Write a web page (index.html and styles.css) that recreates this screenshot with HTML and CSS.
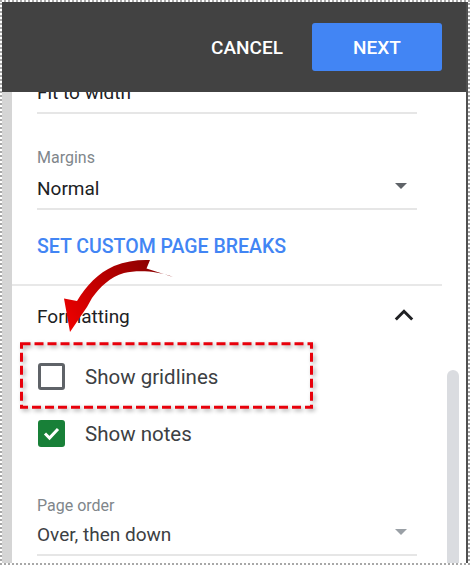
FILE: index.html
```html
<!DOCTYPE html>
<html lang="en">
<head>
    <meta charset="UTF-8">
    <title>Print settings</title>
    <link rel="stylesheet" href="styles.css">
</head>
<body>
<div class="frame">
    <div class="window">
        <header class="toolbar">
            <span class="toolbar__cancel">CANCEL</span>
            <span class="toolbar__next">NEXT</span>
        </header>
        <div class="main">
            <div class="gutter"></div>
            <div class="panel">
                <div class="field field--cut">
                    <div class="field__label">Scale</div>
                    <div class="field__value">Fit to width</div>
                </div>
                <div class="field">
                    <div class="field__label">Margins</div>
                    <div class="field__value">Normal <span class="caret"></span></div>
                </div>
                <div class="link">SET CUSTOM PAGE BREAKS</div>
                <div class="divider"></div>
                <div class="section">
                    <span>Formatting</span>
                    <svg class="section__chevron" width="20" height="12" viewBox="0 0 20 12">
                        <polyline points="1.8,10.5 10,2.3 18.2,10.5" fill="none" stroke="#202124" stroke-width="3"/>
                    </svg>
                </div>
                <div class="checks">
                    <div class="check">
                        <span class="check__box"></span>
                        <span class="check__label">Show gridlines</span>
                    </div>
                    <div class="check">
                        <span class="check__box check__box--on">
                            <svg width="21" height="21" viewBox="0 0 21 21">
                                <polyline points="4,10.5 8.5,15 17,6" fill="none" stroke="#fff" stroke-width="3"/>
                            </svg>
                        </span>
                        <span class="check__label">Show notes</span>
                    </div>
                </div>
                <div class="field field--muted">
                    <div class="field__label">Page order</div>
                    <div class="field__value">Over, then down <span class="caret"></span></div>
                </div>
            </div>
            <div class="scroll">
                <div class="scroll__thumb"></div>
            </div>
        </div>
    </div>
</div>
<svg class="annotation" width="470" height="565" viewBox="0 0 470 565">
    <defs>
        <linearGradient id="arrowFill" x1="170" y1="262" x2="70" y2="330" gradientUnits="userSpaceOnUse">
            <stop offset="0" stop-color="#7d0000"/>
            <stop offset="1" stop-color="#ee0000"/>
        </linearGradient>
    </defs>
    <rect class="annotation__box" x="21.5" y="343.8" width="290" height="63.5"/>
    <path d="M150,260 L146.5,268.5 L173,277 C158,271 138,270 124,273 C110,277 100,287 92,298 L87,307 L70,332 L64,298.5 L77,301 C86,286 98,273 114,266 C126,261 138,259.5 150,260 Z" fill="url(#arrowFill)"/>
</svg>
</body>
</html>
```

FILE: styles.css
```css
html,
body {
    margin: 0;
    padding: 0;
    background: #fff;
}

body {
    position: relative;
    width: 470px;
    height: 565px;
    font-family: Roboto, "Noto Sans", sans-serif;
}

.frame {
    box-sizing: border-box;
    width: 470px;
    height: 565px;
    border: 2px dotted #a8a8a8;
}

.window {
    display: flex;
    flex-direction: column;
    height: 100%;
    border-right: 2px solid #505050;
}

.toolbar {
    flex: none;
    display: flex;
    align-items: center;
    justify-content: flex-end;
    height: 90px;
    padding-right: 24px;
    background: #424242;
}

.toolbar__cancel {
    margin-right: 29px;
    color: #fff;
    font-size: 19px;
    font-weight: 500;
}

.toolbar__next {
    display: flex;
    align-items: center;
    justify-content: center;
    width: 130px;
    height: 48px;
    border-radius: 3px;
    background: #4285f4;
    color: #fff;
    font-size: 19px;
    font-weight: 500;
}

.main {
    flex: 1;
    display: flex;
    min-height: 0;
}

.gutter {
    width: 10px;
    background: #d5d5d5;
}

.panel {
    width: 430px;
    overflow: hidden;
}

.scroll {
    flex: 1;
    overflow: hidden;
}

.scroll__thumb {
    width: 12px;
    height: 300px;
    margin: 278px 0 0 5px;
    border-radius: 6px 6px 0 0;
    background: #dadce0;
}

.field {
    margin: 0 25px;
    padding-top: 34px;
    border-bottom: 2px solid #e6e6e6;
}

.field--cut {
    margin-top: -74px;
}

.field__label {
    color: #80868b;
    font-size: 16px;
    line-height: 20px;
}

.field__value {
    display: flex;
    align-items: center;
    justify-content: space-between;
    margin-top: 7px;
    padding-bottom: 5px;
    color: #202124;
    font-size: 19px;
    line-height: 28px;
}

.field--muted .field__value {
    margin-top: 5px;
    color: #3c4043;
}

.caret {
    width: 0;
    height: 0;
    margin: 0 10px 6px 0;
    border-left: 6px solid transparent;
    border-right: 6px solid transparent;
    border-top: 6px solid #5f6368;
}

.field--muted .caret {
    border-top-color: #9aa0a6;
}

.link {
    margin: 25px 25px 0;
    color: #4285f4;
    font-size: 19.5px;
    font-weight: 500;
    line-height: 24px;
}

.divider {
    height: 2px;
    margin-top: 24.5px;
    background: #e8e8e8;
}

.section {
    display: flex;
    align-items: center;
    justify-content: space-between;
    margin: 17px 25px 0;
    color: #202124;
    font-size: 19px;
    line-height: 28px;
}

.section__chevron {
    margin: 0 3px 4px 0;
}

.checks {
    margin-top: 17px;
}

.check {
    display: flex;
    align-items: center;
    gap: 20px;
    height: 57px;
    margin-left: 26px;
}

.check__box {
    display: flex;
    align-items: center;
    justify-content: center;
    box-sizing: border-box;
    width: 27px;
    height: 27px;
    border: 3px solid #5f6368;
    border-radius: 3px;
}

.check__box--on {
    border-color: #188038;
    background: #188038;
}

.check__label {
    padding-top: 2px;
    color: #3c4043;
    font-size: 20.5px;
    line-height: 28px;
}

.annotation {
    position: absolute;
    top: 0;
    left: 0;
    pointer-events: none;
}

.annotation__box {
    fill: none;
    stroke: #e8000b;
    stroke-width: 3;
    stroke-dasharray: 9 4;
    filter: drop-shadow(2px 2px 2px rgba(0, 0, 0, .35));
}
```
